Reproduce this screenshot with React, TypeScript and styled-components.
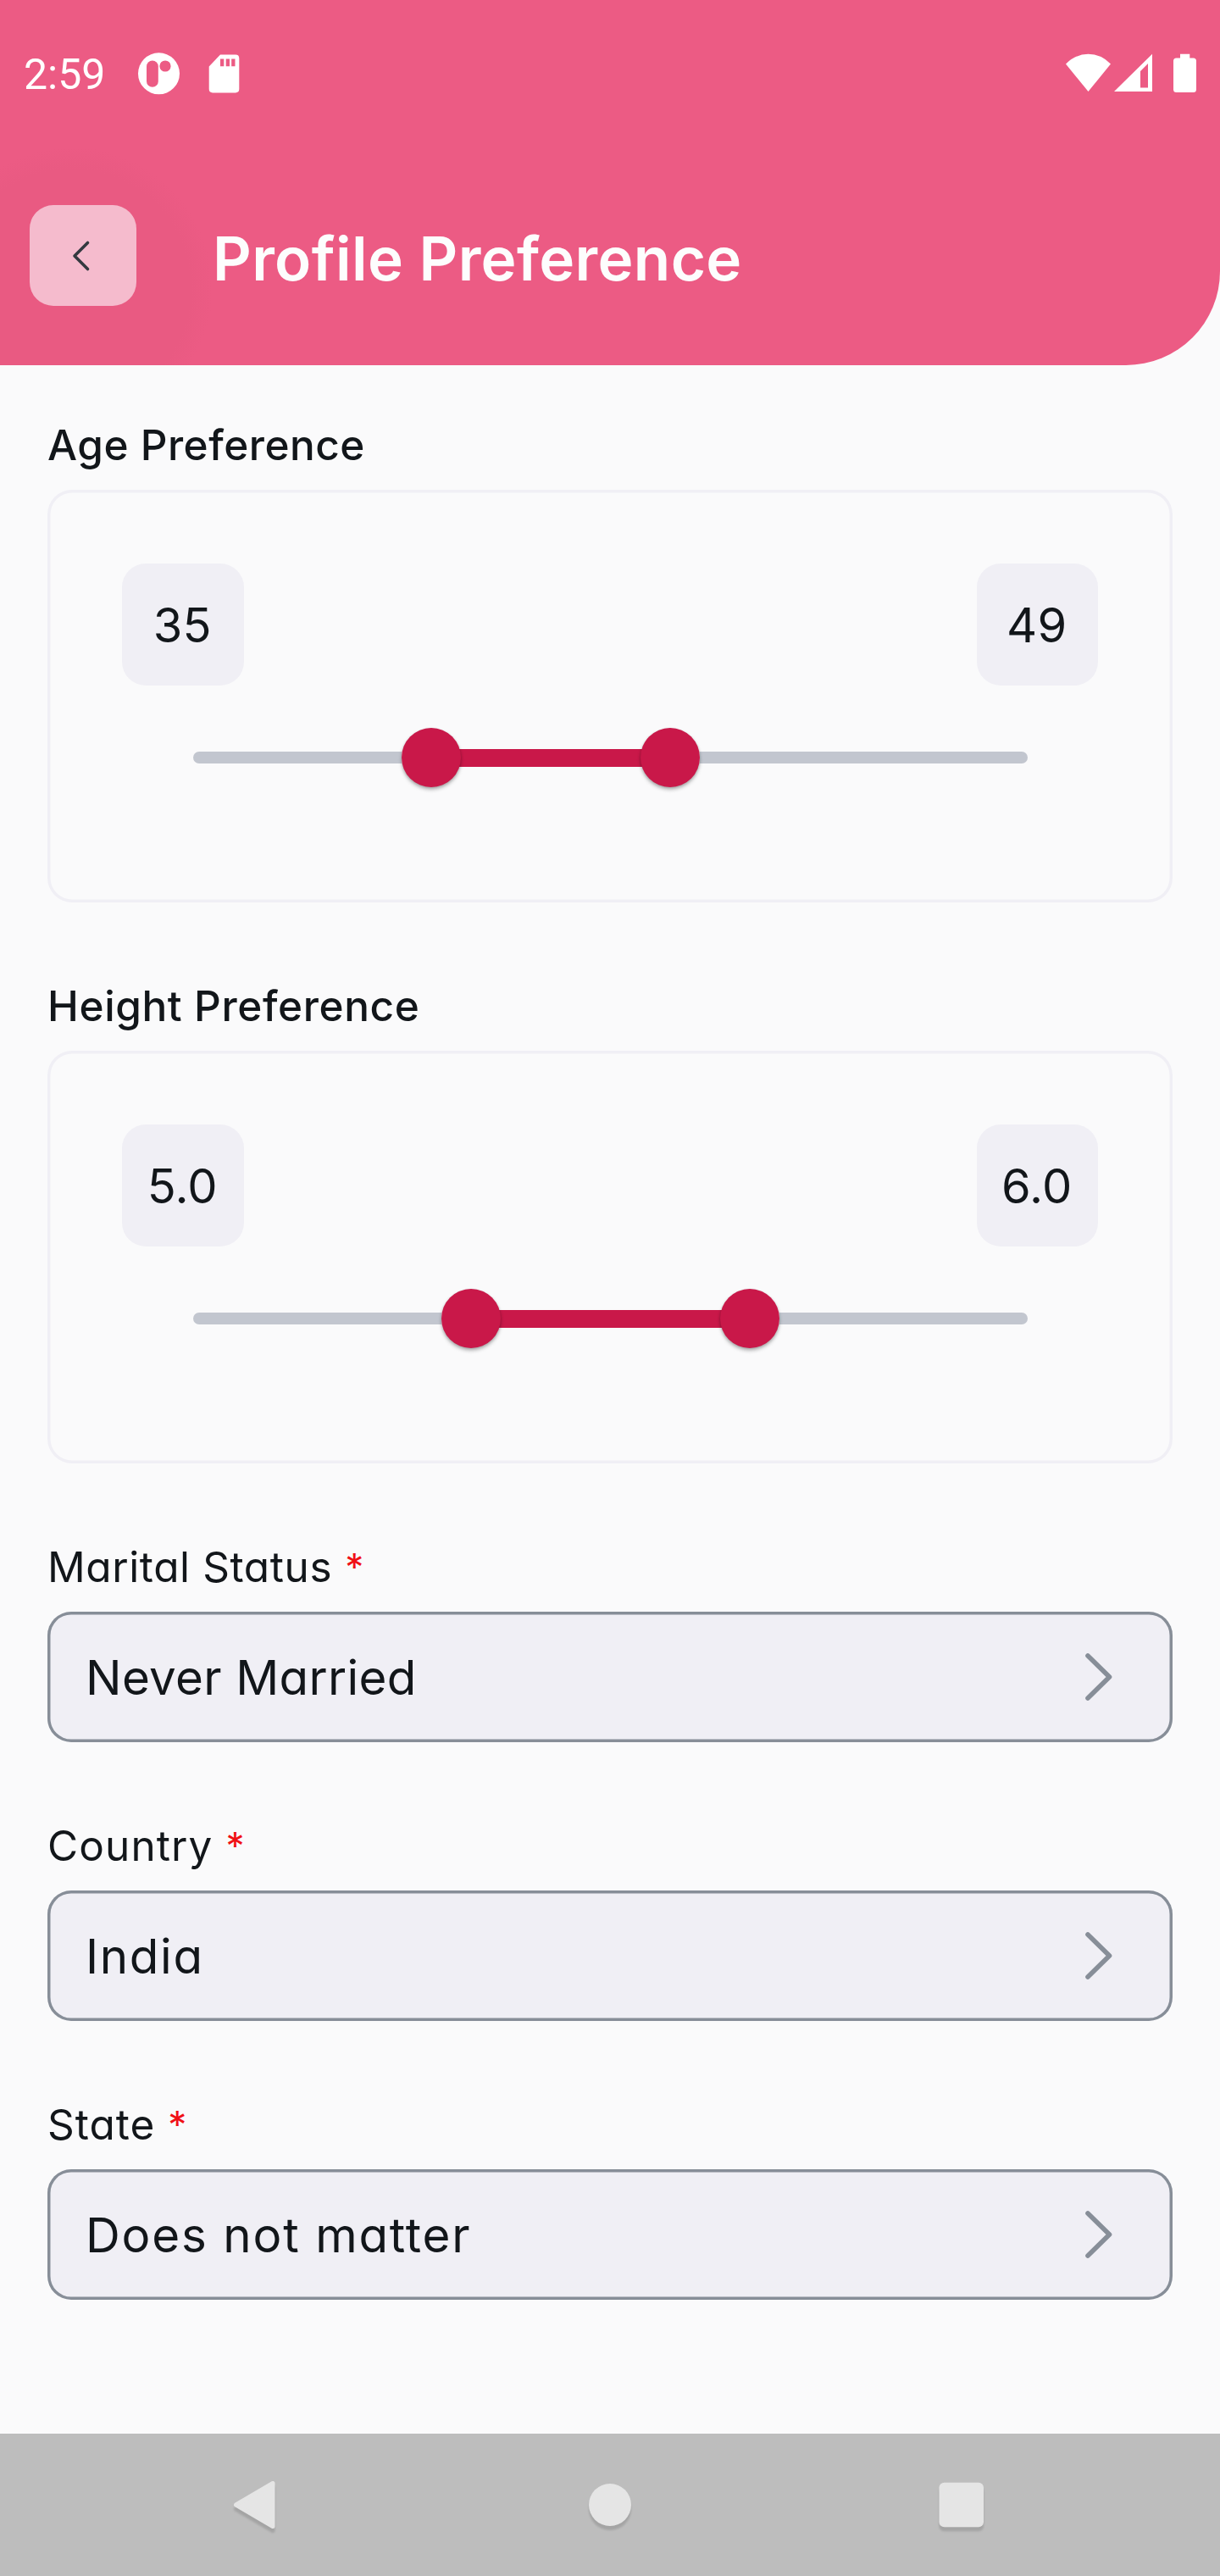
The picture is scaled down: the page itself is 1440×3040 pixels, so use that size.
import React from 'react';
import styled, { createGlobalStyle } from 'styled-components';

const color = {
  page: '#fafafb',
  pink: '#ec5b84',
  ripple: '#e95a82',
  crimson: '#c91849',
  ink: '#12161a',
  tile: '#f0eff5',
  rail: '#c2c6cf',
  outline: '#878e98',
  required: '#f01015',
};

const GlobalStyle = createGlobalStyle`
  *, *::before, *::after { box-sizing: border-box; }
  body {
    margin: 0;
    background: ${color.page};
    color: ${color.ink};
    font-family: Inter, 'Open Sans', sans-serif;
    font-feature-settings: 'cv11' 1;
  }
`;

const Screen = styled.div`
  display: flex;
  flex-direction: column;
  width: 1440px;
  height: 3040px;
  background: ${color.page};
`;

const Header = styled.header`
  height: 431px;
  border-bottom-right-radius: 111px;
  background: radial-gradient(circle at 85px 340px, ${color.ripple} 0, ${color.ripple} 140px, transparent 166px) ${color.pink};
`;

const StatusBar = styled.div`
  display: flex;
  align-items: center;
  justify-content: space-between;
  height: 173px;
  padding: 0 28px;
`;

const StatusGroup = styled.div<{ $gap?: number }>`
  display: flex;
  align-items: center;
  gap: ${({ $gap = 0 }) => $gap}px;
`;

const Clock = styled.span`
  width: 100px;
  padding-top: 3px;
  color: #fff;
  font: 400 50px/60px Roboto, sans-serif;
  white-space: nowrap;
`;

const Icon = styled.svg`
  display: block;
  flex: none;
`;

const TitleBar = styled.div`
  display: flex;
  align-items: center;
  gap: 90px;
  padding: 69px 35px 0;
`;

const BackButton = styled.button`
  display: flex;
  align-items: center;
  justify-content: center;
  width: 126px;
  height: 119px;
  padding: 0 4px 0 0;
  border: 0;
  border-radius: 28px;
  background: #f5bbcd;
`;

const Title = styled.h1`
  margin: 0;
  padding-top: 6px;
  color: #fdfdfd;
  font-size: 71px;
  font-weight: 600;
  line-height: 84px;
  letter-spacing: 0.35px;
  white-space: nowrap;
`;

const Form = styled.main`
  display: flex;
  flex: 1;
  flex-direction: column;
  gap: 93px;
  padding: 65px 56px 0;
`;

const Section = styled.section`
  display: flex;
  flex-direction: column;
  gap: 22px;
`;

const Label = styled.div<{ $weight?: number; $tracking: number }>`
  display: flex;
  gap: 15px;
  height: 60px;
  font-size: 49.5px;
  font-weight: ${({ $weight = 400 }) => $weight};
  line-height: 58px;
  letter-spacing: ${({ $tracking }) => $tracking}px;
  white-space: nowrap;
`;

const Required = styled.span`
  color: ${color.required};
  font-size: 44px;
  letter-spacing: 0;
`;

const RangeCard = styled.div`
  height: 487px;
  padding: 87px 88px 0;
  border-radius: 29px;
  box-shadow: inset 0 0 0 3.5px ${color.tile};
`;

const Values = styled.div`
  display: flex;
  justify-content: space-between;
`;

const ValueTile = styled.div`
  display: flex;
  align-items: center;
  justify-content: center;
  width: 143.5px;
  height: 144px;
  padding: 2px 1px 0 0;
  border-radius: 28px;
  background: ${color.tile};
  font-size: 56px;
  letter-spacing: 0.2px;
`;

const Slider = styled.div`
  display: flex;
  align-items: center;
  height: 70px;
  margin: 50px 83px 0 84px;
`;

const Rail = styled.div<{ $side: 'low' | 'high' }>`
  height: 14px;
  border-radius: ${({ $side }) => ($side === 'low' ? '7px 0 0 7px' : '0 7px 7px 0')};
  background: ${color.rail};
`;

/* Runs a little way under both thumbs so their round edges meet it cleanly. */
const ActiveRail = styled.div`
  flex: 1;
  height: 21px;
  margin: 0 -10px;
  background: ${color.crimson};
`;

const Thumb = styled.div`
  z-index: 1;
  flex: none;
  width: 70px;
  height: 70px;
  border-radius: 50%;
  background: ${color.crimson};
  box-shadow: 0 3px 4px rgba(0, 0, 0, 0.26), 0 1px 3px rgba(0, 0, 0, 0.14);
`;

const SelectField = styled.button<{ $tracking: number }>`
  display: flex;
  align-items: center;
  justify-content: space-between;
  height: 154px;
  padding: 0 68px 0 45px;
  border: 0;
  border-radius: 28px;
  background: ${color.tile};
  box-shadow: inset 0 0 0 3.5px ${color.outline};
  color: inherit;
  font: inherit;
  font-size: 56.5px;
  font-feature-settings: inherit;
  line-height: 68px;
  letter-spacing: ${({ $tracking }) => $tracking}px;
  text-align: left;
`;

const SelectValue = styled.span`
  padding-top: 1px;
`;

const NavBar = styled.nav`
  display: grid;
  grid-template-columns: 600px 240px 1fr;
  place-items: center;
  height: 168px;
  padding-right: 10px;
  background: #bdbdbd;
`;

const NavIcon = styled(Icon)`
  overflow: visible;
  filter: drop-shadow(0 5px 1px rgba(0, 0, 0, 0.13));
`;

type Range = {
  label: string;
  tracking: number;
  min: number;
  max: number;
  low: number;
  high: number;
  digits: number;
};

const ranges: Range[] = [
  { label: 'Age Preference', tracking: 0.5, min: 21, max: 70, low: 35, high: 49, digits: 0 },
  { label: 'Height Preference', tracking: 0.6, min: 4, max: 7, low: 5, high: 6, digits: 1 },
];

const selects = [
  { label: 'Marital Status', tracking: 0.6, value: 'Never Married', valueTracking: 0.33 },
  { label: 'Country', tracking: 1.1, value: 'India', valueTracking: 1.65 },
  { label: 'State', tracking: 1, value: 'Does not matter', valueTracking: 1.8 },
];

function RangeSection({ label, tracking, min, max, low, high, digits }: Range) {
  const before = ((low - min) / (max - min)) * 100;
  const after = ((max - high) / (max - min)) * 100;
  return (
    <Section>
      <Label $weight={500} $tracking={tracking}>{label}</Label>
      <RangeCard>
        <Values>
          <ValueTile>{low.toFixed(digits)}</ValueTile>
          <ValueTile>{high.toFixed(digits)}</ValueTile>
        </Values>
        <Slider>
          <Rail $side="low" style={{ width: `calc(${before}% - 35px)` }} />
          <Thumb />
          <ActiveRail />
          <Thumb />
          <Rail $side="high" style={{ width: `calc(${after}% - 35px)` }} />
        </Slider>
      </RangeCard>
    </Section>
  );
}

export default function App() {
  return (
    <>
      <GlobalStyle />
      <Screen>
        <Header>
          <StatusBar>
            <StatusGroup $gap={34}>
              <Clock>2:59</Clock>
              <Icon width="50" height="50" viewBox="0 0 50 50">
                <circle cx="25.5" cy="24.8" r="24.5" fill="#fff" />
                <rect x="11" y="9.5" width="13.8" height="31.3" rx="6.9" fill={color.pink} />
                <circle cx="33" cy="16" r="6.6" fill={color.pink} />
              </Icon>
              <Icon width="37" height="46" viewBox="0 0 37 46">
                <path
                  fill="#fff"
                  fillRule="evenodd"
                  d="M14 .6H32Q36.300 .6 36.300 5V41Q36.300 45.400 32 45.400H5Q.7 45.400 .7 41V14.500ZM14 5.500V14.300H18.300V5.500ZM20.700 5.500V14.300H25V5.500ZM27.200 5.500V14.300H31.500V5.500Z"
                />
              </Icon>
            </StatusGroup>
            <StatusGroup>
              <Icon width="158" height="50" viewBox="0 0 158 50">
                <path fill="#fff" d="M4 13.500Q15.500 1.800 30.500 1.800T57 13.500L30.500 46Z" />
                <path fill="#fff" fillRule="evenodd" d="M61 46 106 1.800V46ZM92 22V41.500H101V13Z" />
                <path
                  fill="#fff"
                  d="M139 1.800H150.300V6.500H154.500Q158 6.500 158 10V43.500Q158 47 154.500 47H134.500Q131 47 131 43.500V10Q131 6.500 134.500 6.500H139Z"
                />
              </Icon>
            </StatusGroup>
          </StatusBar>
          <TitleBar>
            <BackButton aria-label="Back">
              <Icon width="22" height="38" viewBox="0 0 22 38" fill="none" stroke="#343a40" strokeWidth="3.6" strokeLinecap="round" strokeLinejoin="round">
                <path d="M18.500 3.500 3 19 18.500 34.500" />
              </Icon>
            </BackButton>
            <Title>Profile Preference</Title>
          </TitleBar>
        </Header>

        <Form>
          {ranges.map((range) => (
            <RangeSection key={range.label} {...range} />
          ))}
          {selects.map((field) => (
            <Section key={field.label}>
              <Label $tracking={field.tracking}>
                {field.label}
                <Required>*</Required>
              </Label>
              <SelectField $tracking={field.valueTracking}>
                <SelectValue>{field.value}</SelectValue>
                <Icon width="36" height="60" viewBox="0 0 36 60" fill="none" stroke={color.outline} strokeWidth="5.6" strokeLinecap="round" strokeLinejoin="round">
                  <path d="M4 5 29.500 30 4 55" />
                </Icon>
              </SelectField>
            </Section>
          ))}
        </Form>

        <NavBar>
          <NavIcon width="60" height="60" viewBox="0 0 60 60">
            <path d="M52 4.500V55.500L8.500 30Z" fill="#e5e5e5" stroke="#e5e5e5" strokeWidth="5" strokeLinejoin="round" />
          </NavIcon>
          <NavIcon width="60" height="60" viewBox="0 0 60 60">
            <circle cx="30" cy="30" r="25" fill="#e5e5e5" />
          </NavIcon>
          <NavIcon width="60" height="60" viewBox="0 0 60 60">
            <rect x="3.500" y="3.800" width="52.500" height="52.500" rx="6" fill="#e5e5e5" />
          </NavIcon>
        </NavBar>
      </Screen>
    </>
  );
}
